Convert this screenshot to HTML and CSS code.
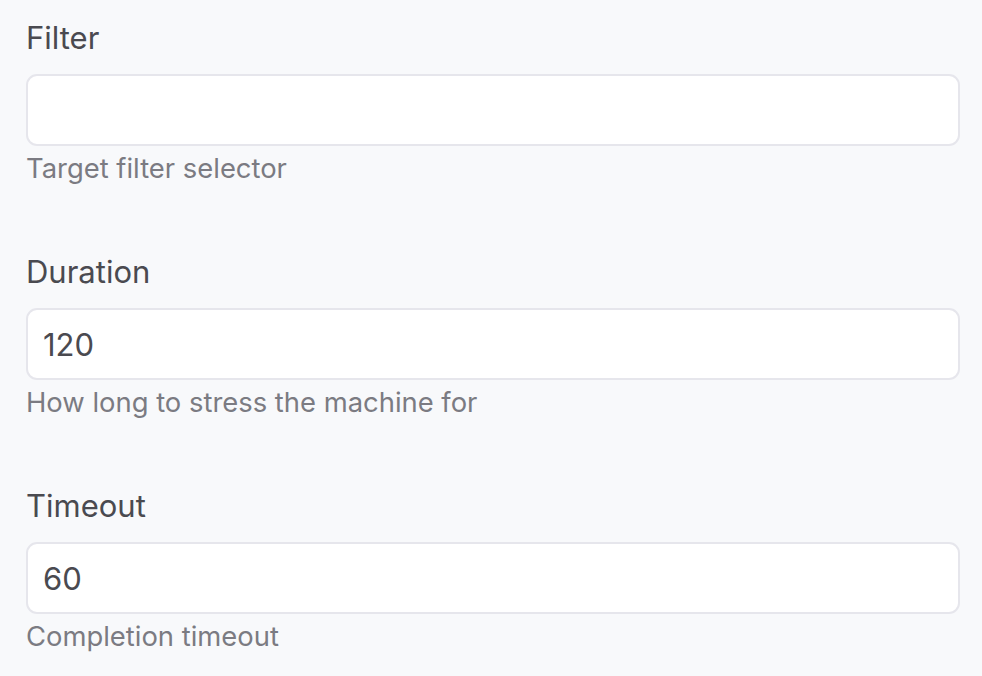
FILE: index.html
```html
<!DOCTYPE html>
<html lang="en">
<head>
<meta charset="utf-8">
<title>Form</title>
<link rel="stylesheet" href="styles.css">
</head>
<body>
<form class="form">
  <div class="field">
    <label class="label" for="filter">Filter</label>
    <input class="input" id="filter" type="text" value="">
    <div class="help">Target filter selector</div>
  </div>
  <div class="field">
    <label class="label" for="duration">Duration</label>
    <input class="input" id="duration" type="text" value="120">
    <div class="help">How long to stress the machine for</div>
  </div>
  <div class="field">
    <label class="label" for="timeout">Timeout</label>
    <input class="input" id="timeout" type="text" value="60">
    <div class="help">Completion timeout</div>
  </div>
</form>
</body>
</html>
```
FILE: styles.css
```css
html, body {
  margin: 0;
  padding: 0;
  background: #f8f9fb;
}
body {
  font-family: Inter, "Noto Sans", sans-serif;
}
.form {
  display: flex;
  flex-direction: column;
  gap: 63px;
  padding: 17px 22px 0 26px;
}
.field {
  display: flex;
  flex-direction: column;
}
.label {
  font-size: 31px;
  line-height: 42px;
  color: #4a4a50;
  margin-bottom: 15px;
}
.input {
  box-sizing: border-box;
  height: 72px;
  width: 100%;
  border: 2px solid #e6e6ec;
  border-radius: 11px;
  background: #ffffff;
  padding: 0 15px;
  font-family: inherit;
  font-size: 31px;
  color: #4a4a50;
  outline: none;
}
.help {
  font-size: 27.4px;
  line-height: 40px;
  color: #7b7b82;
  margin-top: 2px;
}
```
